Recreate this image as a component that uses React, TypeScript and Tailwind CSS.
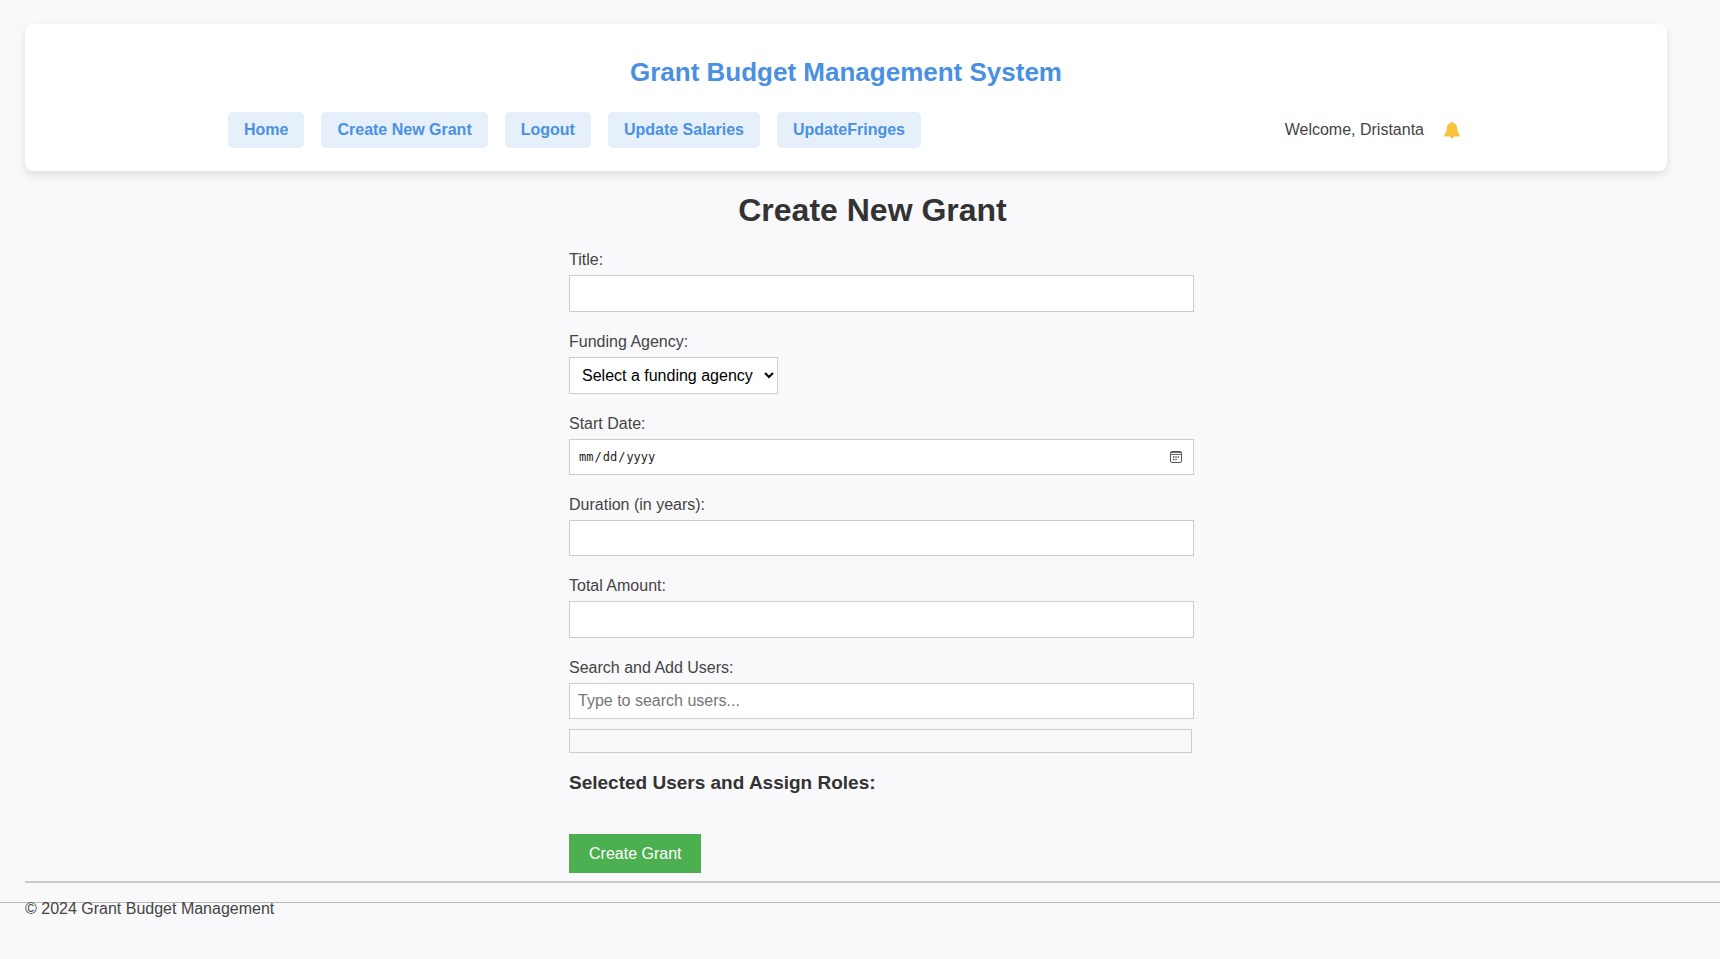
import React from 'react';

const navLinks = ['Home', 'Create New Grant', 'Logout', 'Update Salaries', 'UpdateFringes'];

const inputClass =
  'block w-[calc(100%+18px)] border border-[#cccccc] bg-white px-2 text-base text-black placeholder:text-[#757575] outline-none';

function Field({ id, label, children }: { id: string; label: string; children: React.ReactNode }) {
  return (
    <div className="mb-[18px]">
      <label htmlFor={id} className="mb-[3px] block leading-6">
        {label}
      </label>
      {children}
    </div>
  );
}

function BellIcon() {
  return (
    <svg viewBox="0 0 16 16" className="h-4 w-4" aria-hidden="true">
      <path
        fill="#f8c23c"
        d="M8 0c.8 0 1.200.4 1.400 1C11.800 1.500 13 3.500 13.300 6c.3 3 .8 5 2.200 6.700.7.900.4 1.800-.6 1.800H1.100c-1 0-1.300-.9-.6-1.800C1.900 11 2.400 9 2.700 6 3 3.500 4.200 1.500 6.600 1 6.800.4 7.200 0 8 0Z"
      />
      <path fill="#f0a030" d="M6.200 14.500h3.600c-.2 1-.9 1.500-1.800 1.500s-1.600-.5-1.800-1.500Z" />
    </svg>
  );
}

function CalendarIcon() {
  return (
    <svg viewBox="0 0 12 12" className="pointer-events-none absolute right-3 top-3 h-3 w-3" aria-hidden="true">
      <rect x="0.5" y="0.5" width="11" height="11" rx="1.5" fill="none" stroke="#555" />
      <path d="M0.500 3.500h11M1 1.500h10" stroke="#666" />
      <path d="M3 6h1.300M5.400 6h1.300M7.800 6h1.300M3 8.500h1.300M5.400 8.500h1.300" stroke="#444" strokeWidth="1.300" />
    </svg>
  );
}

export default function App() {
  return (
    <div className="min-h-screen bg-[#f9f9fb] pt-6 font-['Liberation_Sans',Arial,sans-serif] text-base text-[#444444]">
      <div className="pl-[25px]">
        <header className="mr-[53px] rounded-lg bg-white pt-6 pb-[23px] shadow-[0_4px_8px_rgba(0,0,0,0.1)]">
          <h1 className="text-center text-[26px] leading-[48px] font-bold text-[#4a90e2]">
            Grant Budget Management System
          </h1>
          <div className="mx-auto mt-4 flex w-[1236px] max-w-full items-center justify-between">
            <nav className="flex gap-[17px]">
              {navLinks.map((name) => (
                <a
                  key={name}
                  href="#"
                  className="rounded-[5px] bg-[#e6f0fa] px-4 py-[6px] leading-6 font-bold text-[#4a90e2]"
                >
                  {name}
                </a>
              ))}
            </nav>
            <div className="mr-1 flex items-center gap-5">
              <span>Welcome, Dristanta</span>
              <button type="button" aria-label="Notifications">
                <BellIcon />
              </button>
            </div>
          </div>
        </header>

        <main>
          <h2 className="pt-[18px] text-center text-[32px] leading-[42px] font-bold text-[#333333]">
            Create New Grant
          </h2>
          <form className="mx-auto mt-[17px] w-[607px]" onSubmit={(e) => e.preventDefault()}>
            <Field id="title" label="Title:">
              <input id="title" type="text" className={`${inputClass} h-[37px]`} />
            </Field>
            <Field id="agency" label="Funding Agency:">
              <select id="agency" className="block h-[37px] border border-[#cccccc] bg-white px-2 text-black">
                <option>Select a funding agency</option>
              </select>
            </Field>
            <Field id="start" label="Start Date:">
              <div className="relative w-[calc(100%+18px)]">
                <input
                  id="start"
                  type="date"
                  className="block h-9 w-full border border-[#cccccc] bg-white px-2 font-['DejaVu_Sans_Mono',monospace] text-[12px] text-[#222222] outline-none [&::-webkit-calendar-picker-indicator]:opacity-0"
                />
                <CalendarIcon />
              </div>
            </Field>
            <Field id="duration" label="Duration (in years):">
              <input id="duration" type="text" className={`${inputClass} h-9`} />
            </Field>
            <Field id="amount" label="Total Amount:">
              <input id="amount" type="text" className={`${inputClass} h-[37px]`} />
            </Field>
            <Field id="users" label="Search and Add Users:">
              <input id="users" type="text" placeholder="Type to search users..." className={`${inputClass} h-9`} />
              <div className="mt-[10px] h-6 w-[calc(100%+16px)] border border-[#cccccc] bg-[#f9f9f9]" />
            </Field>
            <h3 className="text-[19px] leading-6 font-bold text-[#333333]">Selected Users and Assign Roles:</h3>
            <button type="submit" className="mt-[39px] block h-[39px] bg-[#4caf50] px-5 text-white">
              Create Grant
            </button>
          </form>
        </main>
        <hr className="mt-2 border-t-2 border-[#c8c8c8]" />
      </div>
      <footer className="mt-[19px] border-t border-[#b8b8b8] pl-[25px]">
        <p className="-mt-1 leading-5">© 2024 Grant Budget Management</p>
      </footer>
    </div>
  );
}
